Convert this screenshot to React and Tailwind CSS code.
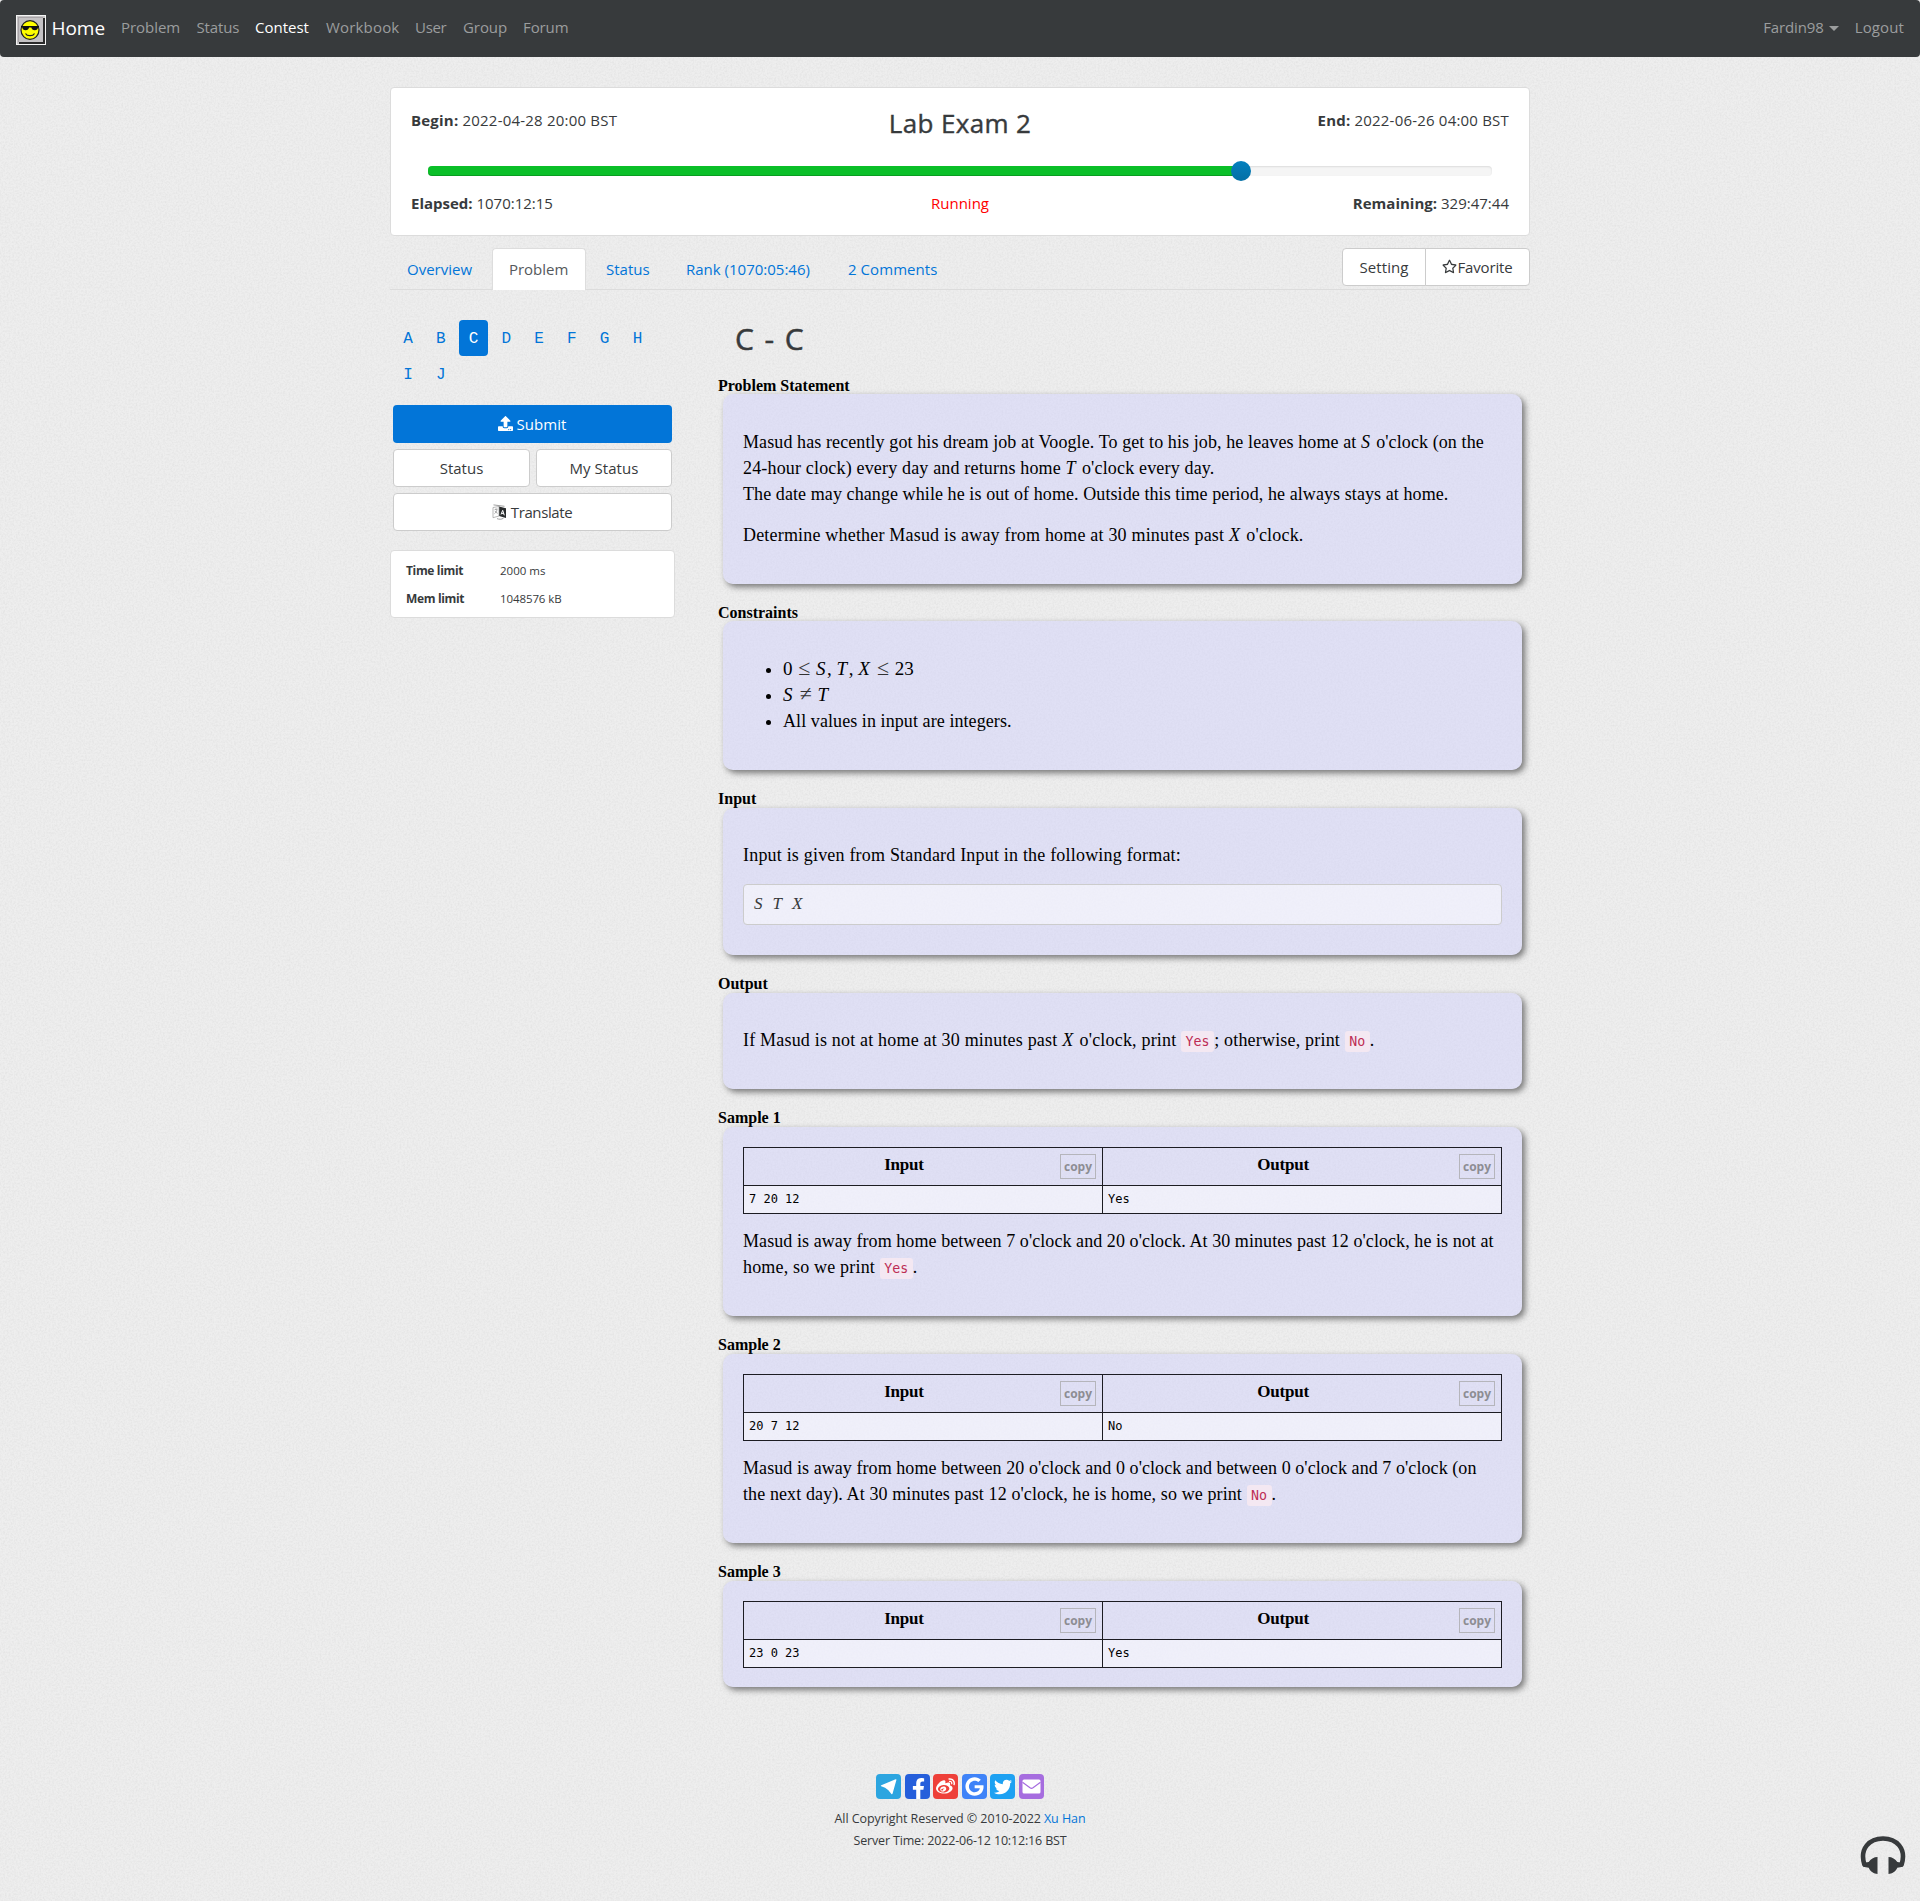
import React from "react";
import { FaRegStar, FaUpload, FaFacebookF, FaWeibo, FaGoogle, FaTwitter } from "react-icons/fa";

function PaperTexture() {
  return (
    <svg className="pointer-events-none absolute inset-0 h-full w-full" aria-hidden="true">
      <filter id="paper">
        <feTurbulence type="fractalNoise" baseFrequency="0.55" numOctaves="3" seed="4" stitchTiles="stitch" />
        <feColorMatrix type="matrix" values="0 0 0 0 0.35  0 0 0 0 0.35  0 0 0 0 0.35  0.24 0 0 0 -0.085" />
      </filter>
      <rect width="100%" height="100%" filter="url(#paper)" />
    </svg>
  );
}

function Logo() {
  return (
    <svg width="30" height="30" viewBox="0 0 30 30" className="block">
      <rect width="30" height="30" fill="#f4f4f4" />
      <rect x="1" y="1" width="28" height="28" fill="#c4c2c4" />
      <path d="M29 3v26H3v-2h24V3z" fill="#2a2a2a" />
      <path d="M2 2h25v1H3v24H2z" fill="#a8a4a8" />
      <ellipse cx="14" cy="15" rx="9" ry="9.400" fill="#ff0" stroke="#222" strokeWidth="1.200" />
      <path d="M5 11h18v1.600h-1c-.3 1.800-1.200 2.600-3.200 2.600s-3.100-1-3.500-2.600h-2.200c-.4 1.600-1.500 2.600-3.500 2.600s-3-.8-3.300-2.600H5z" fill="#111" />
      <path d="M9.500 18.500c1.500 2.900 7.500 2.900 9 0" fill="none" stroke="#222" strokeWidth="1.200" />
    </svg>
  );
}

function TranslateIcon() {
  return (
    <svg width="15" height="16" viewBox="0 0 15 16" className="block">
      <path d="M7 2.500 14 4.300v9.700L7 12z" fill="#292b2c" />
      <path d="M9 10.500 10.700 6.300l1.600 5M9.600 9.200l2.200.5" fill="none" stroke="#fff" strokeWidth="1" />
      <path d="M1 3.500 7 2.500V12l-6 1.700z" fill="#fff" stroke="#999" strokeWidth=".7" />
      <path d="M2.500 5.800 5.500 5M4 4.400v1M5 5.500c-.3 2-1.400 3.500-2.600 4.200M3 7c.6 1.200 1.600 2 2.700 2.300" fill="none" stroke="#888" strokeWidth=".7" />
      <path d="M1.500.9 12.500 2.300M5 14.600c2 .9 4.500.9 6.500-.4" fill="none" stroke="#888" strokeWidth=".8" />
    </svg>
  );
}

function Headphones() {
  return (
    <svg width="46" height="40" viewBox="0 0 46 40" className="block">
      <path d="M4.500 29C-1 12 10 2.500 23 2.500S47 12 41.500 29" fill="none" stroke="#373a3c" strokeWidth="4.600" />
      <path d="M17.500 21v17c-3.500 0-7-2.200-8.800-6.200L3 30.800 2 27l6.700-1C10.500 23 14 21 17.500 21zM28.500 21v17c3.500 0 7-2.200 8.800-6.200l5.700-1L44 27l-6.700-1c-1.800-3-5.300-5-8.800-5z" fill="#373a3c" />
    </svg>
  );
}

function Plane() {
  return (
    <svg width="25" height="25" viewBox="0 0 25 25" className="block">
      <path d="M5.300 11.200 19.600 5.300c.6-.2 1 .1.800.8L16.600 19.600c-.2.700-.8.700-1.200.3l-3-3.700-3.300-2.500-3.900-1.500c-.5-.3-.5-.7.1-1z" fill="#fff" />
    </svg>
  );
}

function Envelope() {
  return (
    <svg width="19" height="15" viewBox="0 0 19 15" className="block">
      <rect x=".5" y=".5" width="18" height="14" rx="1.500" fill="#fff" />
      <path d="M.5 3.200 8 8.800q1.500 1 3 0l7.500-5.600" fill="none" stroke="#a66ddf" strokeWidth="1.200" />
    </svg>
  );
}

function Btn({ className = "", children }) {
  return (
    <div className={"flex items-center justify-center rounded-[4px] border border-[#ccc] bg-white pb-px whitespace-nowrap " + className}>
      {children}
    </div>
  );
}

const Var = ({ children }) => <i className="mr-[1.500px] font-['Liberation_Serif',serif]">{children}</i>;

const Rel = ({ children }) => <span className="mx-[1px] text-[22px] leading-none text-[#333]">{children}</span>;

const Code = ({ children }) => (
  <code className="rounded-[3px] bg-[#f4e8f2] px-[4.500px] py-[3px] font-['DejaVu_Sans_Mono',monospace] text-[13.300px] tracking-normal text-[#bd2c54]">
    {children}
  </code>
);

function Section({ title, height, head = "h-[18px]", top = "pt-5", children }) {
  return (
    <section className={"flex flex-col " + height}>
      <h2 className={"font-['Liberation_Serif',serif] text-base leading-[17px] font-bold text-black " + head}>{title}</h2>
      <div className={"mr-2 ml-[5px] flex-1 rounded-[10px] bg-[#d1d1fb]/50 px-5 font-['Liberation_Serif',serif] text-lg leading-[26px] whitespace-nowrap text-black shadow-[3px_3px_6px_#777] " + top}>
        {children}
      </div>
      <div className="h-[20px]" />
    </section>
  );
}

function SampleTable({ input, output }) {
  const head = "relative flex h-[38px] items-center justify-center pr-[38px] pb-[3px] border-[#1c1c22] text-[17px] font-bold tracking-[-0.200px] border-b";
  const cell = "h-[27px] bg-white/50 px-[5px] leading-[26px] font-['DejaVu_Sans_Mono',monospace] text-xs text-black";
  const copy = (
    <span className="absolute top-[6px] right-[6px] flex h-[25px] w-9 items-center justify-center border border-[#b5b5bb] font-['Open_Sans',sans-serif] text-xs font-bold tracking-normal text-[#8d8d93]">
      copy
    </span>
  );
  return (
    <div className="mb-[14px] grid grid-cols-[359px_1fr] border border-[#1c1c22]">
      <div className={head + " border-r"}>Input{copy}</div>
      <div className={head}>Output{copy}</div>
      <div className={cell + " border-r border-[#1c1c22]"}>{input}</div>
      <div className={cell}>{output}</div>
    </div>
  );
}

const problems = ["A", "B", "C", "D", "E", "F", "G", "H", "I", "J"];

const socials = [
  { bg: "bg-[#2ca5e0]", gap: "", icon: <Plane /> },
  { bg: "bg-[#265fdb]", gap: "ml-[4px]", icon: <FaFacebookF size={21} className="mt-[4px] ml-px" /> },
  { bg: "bg-[#ee4039]", gap: "ml-[3px]", icon: <FaWeibo size={19} /> },
  { bg: "bg-[#3f83f8]", gap: "ml-[4px]", icon: <FaGoogle size={19} /> },
  { bg: "bg-[#1da1f2]", gap: "ml-[3px]", icon: <FaTwitter size={18} /> },
  { bg: "bg-[#a66ddf]", gap: "ml-[4px]", icon: <Envelope /> },
];

export default function App() {
  return (
    <div className="relative h-[1901px] w-full overflow-hidden bg-[#eeeeee] font-['Open_Sans',sans-serif] text-[15px] leading-6 text-[#373a3c]">
      <PaperTexture />

      <div className="relative">
        <nav className="flex h-[57px] items-start rounded-[4px] bg-[#373a3c] px-4 text-[#9b9d9e]">
          <div className="flex pt-[15px]"><Logo /></div>
          <span className="w-[69px] pt-4 pl-[5.500px] text-[19px] tracking-[-0.050px] text-white">Home</span>
          <div className="flex pt-[15px] pl-[6px] whitespace-nowrap">
            <span className="w-[75.500px] tracking-[-0.050px]">Problem</span>
            <span className="w-[58.500px] tracking-[-0.150px]">Status</span>
            <span className="w-[71px] text-white">Contest</span>
            <span className="w-[89px] tracking-[0.180px]">Workbook</span>
            <span className="w-[48px] tracking-[-0.300px]">User</span>
            <span className="w-[60px] tracking-[-0.080px]">Group</span>
            <span className="tracking-[-0.100px]">Forum</span>
          </div>
          <div className="ml-auto flex pt-[15px]">
            <span className="tracking-[-0.120px]">Fardin98</span>
            <span className="mt-[11px] mr-[16px] ml-[5px] h-0 w-0 border-x-[5px] border-t-[5px] border-x-transparent border-t-[#9b9d9e]" />
            <span className="tracking-[0.120px]">Logout</span>
          </div>
        </nav>

        <main className="mx-auto w-[1140px] pt-[30px]">
          <div className="h-[149px] rounded-[4px] border border-[#dcdcdc] bg-white px-5 pt-5">
            <div className="grid grid-cols-3">
              <div className="tracking-[0.210px]"><b>Begin:</b> 2022-04-28 20:00 BST</div>
              <h1 className="pt-[3px] text-center text-[26px] font-medium tracking-[0.350px] [-webkit-text-stroke:0.400px_#373a3c]">Lab Exam 2</h1>
              <div className="text-right tracking-[0.200px]"><b>End:</b> 2022-06-26 04:00 BST</div>
            </div>
            <div className="relative mx-[17px] mt-[31px] flex h-[10px] rounded-[4px] bg-[#f5f5f5] shadow-[inset_0_1px_2px_rgba(0,0,0,0.1)]">
              <div className="h-full w-[813px] rounded-l-[4px] bg-[#0abf28] shadow-[inset_0_-1px_0_rgba(0,0,0,0.18)]" />
              <div className="absolute -top-[5px] left-[803px] h-5 w-5 rounded-full bg-linear-to-b from-[#0480be] to-[#036fa5]" />
            </div>
            <div className="mt-[15px] grid grid-cols-3">
              <div className="tracking-[-0.010px]"><b>Elapsed:</b> 1070:12:15</div>
              <div className="text-center text-[#f00]">Running</div>
              <div className="text-right tracking-[0.010px]"><b>Remaining:</b> 329:47:44</div>
            </div>
          </div>

          <div className="mt-3 flex h-[42px] items-start justify-between border-b border-[#dcdcdc]">
            <div className="flex whitespace-nowrap text-[#0275d8]">
              <span className="w-[102px] pt-[9px] pl-[17px]">Overview</span>
              <span className="-mb-px h-[42px] w-[94px] rounded-t-[4px] border border-b-0 border-[#ddd] bg-white pt-[8px] pl-[16px] tracking-[-0.020px] text-[#55595c]">Problem</span>
              <span className="w-[80px] pt-[9px] pl-[20px]">Status</span>
              <span className="w-[162px] pt-[9px] pl-[20px]">Rank (1070:05:46)</span>
              <span className="pt-[9px] pl-[20px] tracking-[0.060px]">2 Comments</span>
            </div>
            <div className="flex">
              <Btn className="h-[38px] w-[84px] rounded-r-none tracking-[0.080px]">Setting</Btn>
              <Btn className="-ml-px h-[38px] w-[105px] rounded-l-none tracking-[-0.150px]"><FaRegStar size={15} />Favorite</Btn>
            </div>
          </div>

          <div className="flex">
            <aside className="w-[285px] pt-[30px]">
              <div className="flex flex-wrap pr-[10px] font-['Liberation_Mono',monospace] text-base text-[#0275d8]">
                {problems.map((p) => (
                  <span
                    key={p}
                    className={"ml-[3.200px] flex h-9 w-[29.600px] items-center justify-center rounded-[4px] pt-px " + (p === "C" ? "bg-[#0275d8] text-white" : "")}
                  >
                    {p}
                  </span>
                ))}
              </div>
              <div className="mt-[13px] mr-[3px] ml-[3px] grid grid-cols-[137px_136px] gap-[6px]">
                <div className="col-span-2 flex h-[38px] items-center justify-center rounded-[4px] bg-[#0275d8] pr-px pb-px font-medium tracking-[0.050px] text-white">
                  <FaUpload size={15} className="mr-[4px]" />Submit
                </div>
                <Btn className="h-[38px]">Status</Btn>
                <Btn className="h-[38px] tracking-[0.050px]">My Status</Btn>
                <Btn className="col-span-2 h-[38px] pr-px tracking-[-0.400px]"><span className="mr-[4px]"><TranslateIcon /></span>Translate</Btn>
              </div>
              <dl className="mt-[19px] grid h-[68px] w-[285px] grid-cols-[94px_1fr] grid-rows-[28px_28px] rounded-[4px] border border-[#dcdcdc] bg-white pt-[6px] pl-[15px] text-[11.500px] leading-[27px]">
                <dt className="text-xs leading-[27px] font-bold tracking-[-0.350px]">Time limit</dt>
                <dd>2000 ms</dd>
                <dt className="text-xs leading-[27px] font-bold tracking-[-0.350px]">Mem limit</dt>
                <dd className="tracking-[-0.100px]">1048576 kB</dd>
              </dl>
            </aside>

            <article className="ml-[43px] w-[812px]">
              <h1 className="h-[87px] pt-[29px] pl-[17px] text-[30px] leading-10 font-medium tracking-[1.400px] [-webkit-text-stroke:0.500px_#373a3c]">C - C</h1>

              <Section title="Problem Statement" height="h-[227px]" head="h-[17px]" top="pt-[35px]">
                <p className="tracking-[0.098px]">Masud has recently got his dream job at Voogle. To get to his job, he leaves home at <Var>S</Var> o'clock (on the</p>
                <p className="tracking-[0.171px]">24-hour clock) every day and returns home <Var>T</Var> o'clock every day.</p>
                <p className="tracking-[0.085px]">The date may change while he is out of home. Outside this time period, he always stays at home.</p>
                <p className="mt-[15px] tracking-[0.189px]">Determine whether Masud is away from home at 30 minutes past <Var>X</Var> o'clock.</p>
              </Section>

              <Section title="Constraints" height="h-[186px]" head="h-[17px]" top="pt-[35px]">
                <ul className="list-disc pl-10">
                  <li><span className="text-[19px]">0 <Rel>≤</Rel> <Var>S</Var>, <Var>T</Var>, <Var>X</Var> <Rel>≤</Rel> 23</span></li>
                  <li><span className="text-[19px]"><Var>S</Var> <Rel>≠</Rel> <Var>T</Var></span></li>
                  <li className="tracking-[0.080px]">All values in input are integers.</li>
                </ul>
              </Section>

              <Section title="Input" height="h-[185px]" top="pt-[34px]">
                <p className="tracking-[0.196px]">Input is given from Standard Input in the following format:</p>
                <div className="mt-[16px] h-[41px] rounded-[4px] border border-[#ccc] bg-white/50 pt-[6px] pl-[10px] text-[17px] text-[#373a3c]">
                  <Var>S</Var>&nbsp;<Var> T</Var>&nbsp;<Var> X</Var>
                </div>
              </Section>

              <Section title="Output" height="h-[134px]" top="pt-[34px]">
                <p className="tracking-[0.190px]">If Masud is not at home at 30 minutes past <Var>X</Var> o'clock, print <Code>Yes</Code>; otherwise, print <Code>No</Code>.</p>
              </Section>

              <Section title="Sample 1" height="h-[227px]">
                <SampleTable input="7 20 12" output="Yes" />
                <p className="tracking-[0.070px]">Masud is away from home between 7 o'clock and 20 o'clock. At 30 minutes past 12 o'clock, he is not at</p>
                <p className="tracking-[0.178px]">home, so we print <Code>Yes</Code>.</p>
              </Section>

              <Section title="Sample 2" height="h-[227px]">
                <SampleTable input="20 7 12" output="No" />
                <p className="tracking-[0.070px]">Masud is away from home between 20 o'clock and 0 o'clock and between 0 o'clock and 7 o'clock (on</p>
                <p className="tracking-[0.106px]">the next day). At 30 minutes past 12 o'clock, he is home, so we print <Code>No</Code>.</p>
              </Section>

              <Section title="Sample 3" height="h-[144px]">
                <SampleTable input="23 0 23" output="Yes" />
              </Section>
            </article>
          </div>
        </main>

        <footer className="flex flex-col items-center pt-[67px] text-[12.500px] leading-[22px]">
          <div className="flex">
            {socials.map((s, i) => (
              <span key={i} className={"flex h-[25px] w-[25px] items-center justify-center overflow-hidden rounded-[4px] text-white " + s.bg + " " + s.gap}>
                {s.icon}
              </span>
            ))}
          </div>
          <p className="mt-[9px] tracking-[-0.080px]">All Copyright Reserved © 2010-2022 <span className="text-[#0275d8]">Xu Han</span></p>
          <p className="tracking-[-0.160px]">Server Time: 2022-06-12 10:12:16 BST</p>
        </footer>
      </div>

      <div className="absolute right-[14px] bottom-[25px]"><Headphones /></div>
    </div>
  );
}
